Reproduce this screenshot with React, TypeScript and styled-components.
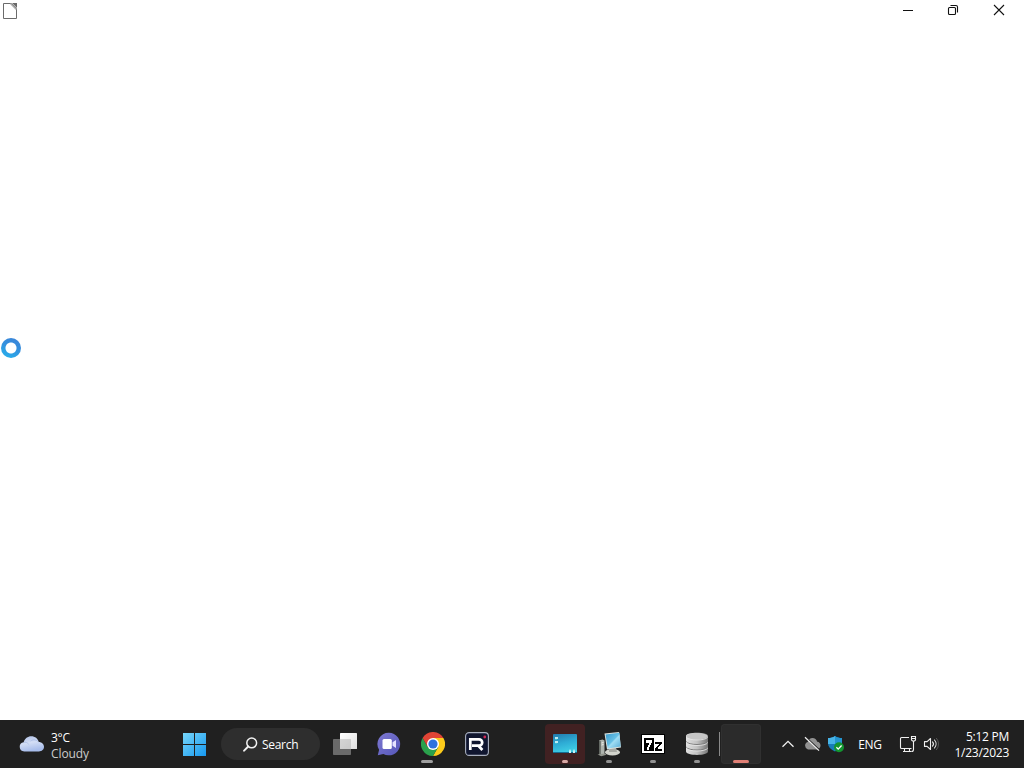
import { ReactNode } from "react";
import styled, { createGlobalStyle } from "styled-components";

interface IApp {
  name: string;
  icon?: ReactNode;
  indicator?: "idle" | "dot" | "alert" | "loading";
}

const WeatherIcon = () => (
  <svg width="25" height="16" viewBox="0 0 24 16" preserveAspectRatio="none">
    <defs>
      <linearGradient id="cloud" x1="0" y1="0" x2="0.3" y2="1">
        <stop offset="0" stopColor="#aebfe6" />
        <stop offset="0.5" stopColor="#d3def5" />
        <stop offset="1" stopColor="#a8bdeb" />
      </linearGradient>
    </defs>
    <path
      d="M5 15.5a4.7 4.7 0 0 1-.5-9.3C5.500 2.600 8.300.3 11.800.3c3.600 0 6.400 2.400 7.100 5.700 2.900.1 5.100 2.100 5.100 4.800s-2.100 4.700-4.900 4.700z"
      fill="url(#cloud)"
    />
    <path d="M4.500 6.200c2-.3 3.700.6 4.800 2M11 5c2.600-2 6-1.200 7.900 1" fill="none" stroke="#91a8dc" strokeWidth=".8" opacity=".6" />
  </svg>
);

const StartIcon = () => (
  <svg width="24" height="24" viewBox="0 0 24 24">
    <defs>
      <linearGradient id="win" gradientUnits="userSpaceOnUse" x1="0" y1="0" x2="24" y2="24">
        <stop offset="0" stopColor="#7bd9fb" />
        <stop offset="1" stopColor="#1698f0" />
      </linearGradient>
    </defs>
    <path d="M1 1h11v11H1zM13 1h11v11H13zM1 13h11v11H1zM13 13h11v11H13z" fill="url(#win)" />
  </svg>
);

const SearchIcon = () => (
  <svg width="15" height="15" viewBox="0 0 15 15" fill="none" stroke="#f2f2f2">
    <circle cx="8.700" cy="5.900" r="4.900" strokeWidth="1.5" />
    <path d="M5.200 9.500L1.100 13.700" strokeWidth="1.9" strokeLinecap="round" />
  </svg>
);

const TaskViewIcon = () => (
  <svg width="24" height="24" viewBox="0 0 24 24">
    <defs>
      <linearGradient id="view" x1="0" y1="0" x2="1" y2="1">
        <stop offset="0" stopColor="#fff" />
        <stop offset="1" stopColor="#dedede" />
      </linearGradient>
    </defs>
    <rect x="0" y="7" width="18" height="16" rx=".8" fill="#6a6a6a" />
    <rect x="7" y="1" width="17" height="16" rx=".6" fill="url(#view)" />
    <path d="M7 7h11v10H7z" fill="#a8a8a8" opacity=".45" />
  </svg>
);

const ChatIcon = () => (
  <svg width="24" height="24" viewBox="0 0 24 24">
    <defs>
      <linearGradient id="chat" x1="0" y1="0" x2="1" y2="1">
        <stop offset="0" stopColor="#7e79d2" />
        <stop offset="1" stopColor="#5556b8" />
      </linearGradient>
    </defs>
    <path d="M12 .7A11.300 11.300 0 1 1 6.400 21.900L.8 23.300l1.300-5.500A11.300 11.300 0 0 1 12 .7z" fill="url(#chat)" />
    <rect x="5.500" y="7" width="9.300" height="10" rx="1.5" fill="#fff" />
    <path d="M15.500 10.300L19 8v8l-3.500-2.300z" fill="#e4e2ff" />
  </svg>
);

const ChromeIcon = () => (
  <svg width="24" height="24" viewBox="0 0 48 48">
    <path d="M24 24V12h20.800A24 24 0 0 1 24 48l10.400-18z" fill="#fccb1b" />
    <path d="M24 24l10.400 6L24 48A24 24 0 0 1 3.200 12l10.400 18z" fill="#2aa14c" />
    <path d="M3.200 12A24 24 0 0 1 44.800 12H24L13.600 30z" fill="#e04435" />
    <circle cx="24" cy="24" r="12" fill="#fff" />
    <circle cx="24" cy="24" r="9.200" fill="#2d72df" />
  </svg>
);

const RIcon = () => (
  <svg width="24" height="24" viewBox="0 0 24 24">
    <rect x=".6" y=".6" width="22.800" height="22.800" rx="3.500" fill="#10162f" stroke="#a9b0bf" strokeWidth="1.1" />
    <path d="M5.300 18V7.300H14a3.200 3.200 0 0 1 0 6.400H7M13.200 13.500l4.200 4.500" fill="none" stroke="#fff" strokeWidth="2.700" />
    <circle cx="19.800" cy="5" r="1.400" fill="#cd2652" />
  </svg>
);

const DesktopIcon = () => (
  <svg width="26" height="24" viewBox="0 0 26 24">
    <defs>
      <linearGradient id="desk" x1="0" y1="0" x2=".3" y2="1">
        <stop offset="0" stopColor="#2379ad" />
        <stop offset=".55" stopColor="#2eacd5" />
        <stop offset="1" stopColor="#3ecbe3" />
      </linearGradient>
    </defs>
    <rect x="1" y="2" width="24" height="19" rx="1" fill="url(#desk)" />
    <path d="M1 20h24v1H1z" fill="#166c91" />
    <path d="M3 5h3v2H3zM3 9h3v2H3z" fill="#bcecf3" />
    <path d="M3 7h2v1H3zM3 11h2v1H3z" fill="#3bc0d2" />
    <path d="M17 19l1-2 1 2v2h-2zM21 19l1-2 1 2v2h-2z" fill="#c7f2f6" />
  </svg>
);

const ComputerIcon = () => (
  <svg width="26" height="26" viewBox="0 0 26 26">
    <defs>
      <linearGradient id="screen" x1="0" y1="0" x2="1" y2="1">
        <stop offset="0" stopColor="#3999cb" />
        <stop offset=".48" stopColor="#65bfe5" />
        <stop offset=".55" stopColor="#a1def4" />
        <stop offset="1" stopColor="#55abd6" />
      </linearGradient>
    </defs>
    <ellipse cx="16.500" cy="21.300" rx="7.500" ry="3.200" fill="#d3d4cd" />
    <path d="M13 17h7l1 4h-8z" fill="#a9aaa4" />
    <path d="M8.500 2.500L23 1l2 15.500L11 18.500z" fill="#dce2de" />
    <path d="M9.600 3.500L23.500 1.800l1.100 13.700-12.800 2z" fill="url(#screen)" />
    <path d="M3 9.500l3.500-1 2 1v14l-4 1-1.500-1z" fill="#aeb3ad" />
    <path d="M3 9.500l1.800.8v13.800L3 23.500z" fill="#656a65" />
    <path d="M5.500 12l2-.4M5.500 14l2-.4" stroke="#f2f2ed" />
    <path d="M1.500 23.500l4 1.700 5-1.500-1.700-1.100z" fill="#92958d" />
  </svg>
);

const SevenZipIcon = () => (
  <svg width="24" height="24" viewBox="0 0 24 24" shapeRendering="crispEdges">
    <path d="M0 2h24v20H0z" fill="#000" />
    <path d="M1 3h22v18H1z" fill="#fff" />
    <path d="M3 6h10v13H3z" fill="#000" />
    <path d="M5 8h6v3h-1v2H9v2H8v3H6v-3h1v-2h1v-2H5z" fill="#fff" />
    <path d="M14 10h7v2h-1v1h-1v1h-1v1h-1v2h4v2h-7v-3h1v-1h1v-1h1v-1h1v-1h-4z" fill="#000" />
  </svg>
);

const DatabaseIcon = () => (
  <svg width="24" height="24" viewBox="0 0 24 24">
    <defs>
      <linearGradient id="disk">
        <stop offset="0" stopColor="#e1e1e1" />
        <stop offset=".5" stopColor="#c2c2c2" />
        <stop offset="1" stopColor="#777" />
      </linearGradient>
    </defs>
    <path d="M1 4C1-.3 23-.3 23 4v15.500c0 4.500-22 4.500-22 0z" fill="url(#disk)" />
    <ellipse cx="12" cy="4.200" rx="10.700" ry="3.200" fill="#c6c6c6" />
    <path d="M1.200 9.500c1.800 4 19.800 4 21.600 0M1.200 15c1.800 4 19.800 4 21.600 0" fill="none" stroke="#7c7c7c" />
    <path d="M1.200 5c1.800 4 19.800 4 21.600 0M1.200 10.500c1.800 4 19.800 4 21.600 0M1.200 16c1.800 4 19.800 4 21.600 0" fill="none" stroke="#e8e8e8" strokeWidth=".8" />
  </svg>
);

const ChevronIcon = () => (
  <svg width="14" height="8" viewBox="0 0 14 8">
    <path d="M1.500 6.800L7 1.300l5.500 5.500" fill="none" stroke="#f0f0f0" strokeWidth="1.3" />
  </svg>
);

const CloudOffIcon = () => (
  <svg width="18" height="16" viewBox="0 0 18 16">
    <path d="M5 13.500a4 4 0 0 1-.3-7.600C5.500 3.500 7.200 2 9.500 2c2.300 0 4.100 1.500 4.700 3.700 2 .1 3.300 1.700 3.300 3.800s-1.500 4-3.600 4z" fill="#929292" />
    <path d="M3 1.100l13.400 12.600" stroke="#202020" strokeWidth="1.200" />
    <path d="M2 1.200l14 13.400" stroke="#f0f0f0" strokeWidth="1.200" />
  </svg>
);

const ShieldIcon = () => (
  <svg width="18" height="18" viewBox="0 0 18 18">
    <path d="M8 1c2 1.500 4.300 2 7 2v5.500c0 3.300-2.500 6-7 8-4.500-2-7-4.700-7-8V3c2.700 0 5-.5 7-2z" fill="#177cb9" />
    <path d="M8 1v8H1V3c2.700 0 5-.5 7-2z" fill="#48b4e7" />
    <path d="M8 1c2 1.500 4.300 2 7 2v6H8z" fill="#2494d0" />
    <circle cx="12" cy="12.200" r="5" fill="#129530" />
    <path d="M9.400 12.300l1.800 1.800 3.400-3.600" fill="none" stroke="#fff" strokeWidth="1.300" />
  </svg>
);

const NetworkIcon = () => (
  <svg width="18" height="18" viewBox="0 0 18 18" fill="none" stroke="#efefef" strokeWidth="1.1">
    <path d="M10 2.500H2.500a1 1 0 0 0-1 1v9a1 1 0 0 0 1 1h10M5.500 13.500v3M10.500 13.500v3M4 16.500h8.500" />
    <path d="M12.500 1.500h4v3.500l-1 1h-2l-1-1zM14.500 6v8.500q0 2-2 2M12.500 3.500h4" />
  </svg>
);

const VolumeIcon = () => (
  <svg width="18" height="16" viewBox="0 0 18 16" fill="none" strokeLinecap="round">
    <path d="M1.500 5.600h2.600l3.400-3.100v11L4.100 10.400H1.500z" stroke="#eee" strokeWidth="1.100" strokeLinejoin="round" />
    <path d="M9.500 5.800a3.300 3.300 0 0 1 0 4.400M11.500 4a6 6 0 0 1 0 8" stroke="#eee" strokeWidth="1.100" />
    <path d="M13.500 2.300a8.500 8.500 0 0 1 0 11.400" stroke="#555" />
  </svg>
);

const apps: IApp[] = [
  { name: "Task View", icon: <TaskViewIcon /> },
  { name: "Chat", icon: <ChatIcon /> },
  { name: "Chrome", icon: <ChromeIcon />, indicator: "idle" },
  { name: "R", icon: <RIcon /> },
  { name: "Spacer" },
  { name: "Desktop", icon: <DesktopIcon />, indicator: "alert" },
  { name: "Computer", icon: <ComputerIcon />, indicator: "dot" },
  { name: "7-Zip", icon: <SevenZipIcon />, indicator: "dot" },
  { name: "Database", icon: <DatabaseIcon />, indicator: "dot" },
  { name: "Document", indicator: "loading" },
];

export default function App() {
  return (
    <>
      <GlobalStyle />
      <Screen>
        <TitleBar>
          <svg width="16" height="18" viewBox="0 0 16 18">
            <path d="M1.500 1.500h8l5 5v10h-13z" fill="#fff" stroke="#6b6b6b" />
            <path d="M10 1h5v5z" fill="#696969" />
            <path d="M8.500 1.500l6 6" stroke="#ababab" strokeWidth="1.500" />
          </svg>
          <WindowControls>
            <button aria-label="Minimize">
              <svg width="12" height="12" viewBox="0 0 12 12">
                <path d="M2 6.500h10" stroke="#111" />
              </svg>
            </button>
            <button aria-label="Restore">
              <svg width="12" height="12" viewBox="0 0 12 12" fill="none" stroke="#111" strokeWidth="1.100">
                <rect x="1.500" y="3.500" width="7" height="7" rx="1" />
                <path d="M3.500 1.500H9A1.500 1.500 0 0 1 10.500 3v5.500" />
              </svg>
            </button>
            <button aria-label="Close">
              <svg width="12" height="12" viewBox="0 0 12 12">
                <path d="M1 1l10 10M11 1L1 11" stroke="#111" strokeWidth="1.100" />
              </svg>
            </button>
          </WindowControls>
        </TitleBar>
        <Content />
        <Taskbar>
          <Weather>
            <WeatherIcon />
            <WeatherText>
              <strong>3°C</strong>
              <span>Cloudy</span>
            </WeatherText>
          </Weather>
          <StartButton aria-label="Start">
            <StartIcon />
          </StartButton>
          <SearchButton>
            <SearchIcon />
            <span>Search</span>
          </SearchButton>
          <AppList>
            {apps.map((app) => (
              <AppSlot key={app.name}>
                <AppTile $kind={app.indicator}>{app.icon}</AppTile>
                {app.indicator && <Indicator $kind={app.indicator} />}
              </AppSlot>
            ))}
          </AppList>
          <Tray>
            <TrayItem $width={24}>
              <ChevronIcon />
            </TrayItem>
            <TrayItem $width={24}>
              <CloudOffIcon />
            </TrayItem>
            <TrayItem $width={24}>
              <ShieldIcon />
            </TrayItem>
            <TrayItem $width={44}>
              <span>ENG</span>
            </TrayItem>
            <TrayItem $width={32}>
              <NetworkIcon />
            </TrayItem>
            <TrayItem $width={16}>
              <VolumeIcon />
            </TrayItem>
            <Clock>
              <span>5:12 PM</span>
              <span>1/23/2023</span>
            </Clock>
          </Tray>
        </Taskbar>
        <BusyCursor />
      </Screen>
    </>
  );
}

const GlobalStyle = createGlobalStyle`
  * {
    box-sizing: border-box;
  }

  body {
    margin: 0;
    overflow: hidden;
    font-family: "Open Sans", "Noto Sans", sans-serif;
  }

  button {
    padding: 0;
    border: none;
    background-color: transparent;
    color: inherit;
    font: inherit;
  }

  svg {
    display: block;
    flex-shrink: 0;
  }
`;

const Screen = styled.div`
  position: relative;
  display: flex;
  flex-direction: column;
  width: 1024px;
  height: 768px;
  background-color: #fff;
`;

const TitleBar = styled.div`
  display: flex;
  align-items: flex-start;
  justify-content: space-between;
  height: 24px;
  padding: 2px 2px 0;
`;

const WindowControls = styled.div`
  display: flex;

  button {
    display: flex;
    justify-content: center;
    width: 46px;
    padding-top: 2px;
  }
`;

const Content = styled.main`
  flex: 1;
`;

const Taskbar = styled.div`
  display: flex;
  align-items: center;
  height: 48px;
  background-color: #202020;
  color: #fff;
  font-size: 12px;
  font-weight: 500;
  line-height: 16px;
`;

const Weather = styled.div`
  display: flex;
  align-items: center;
  gap: 7px;
  width: 172px;
  padding-left: 19px;
`;

const WeatherText = styled.div`
  display: flex;
  flex-direction: column;
  padding-top: 3px;

  strong {
    font-weight: 500;
    letter-spacing: -0.3px;
  }

  span {
    color: #ccc;
    letter-spacing: -0.1px;
  }
`;

const StartButton = styled.button`
  display: flex;
  justify-content: center;
  width: 44px;
`;

const SearchButton = styled.button`
  display: flex;
  align-items: center;
  gap: 4px;
  width: 99px;
  height: 32px;
  margin: 0 3px 0 5px;
  padding-left: 22px;
  border-radius: 16px;
  background-color: #2e2e2e;

  span {
    padding-top: 1px;
    letter-spacing: -0.3px;
  }
`;

const AppList = styled.div`
  display: flex;
`;

const AppSlot = styled.div`
  position: relative;
  display: flex;
  align-items: center;
  justify-content: center;
  width: 44px;
  height: 48px;
`;

const tileColors = {
  idle: "transparent",
  dot: "transparent",
  alert: "#412122",
  loading: "#2b2b2b",
};

const AppTile = styled.div<{ $kind?: IApp["indicator"] }>`
  display: flex;
  align-items: center;
  justify-content: center;
  width: 40px;
  height: 40px;
  border-radius: 4px;
  background-color: ${({ $kind }) => ($kind ? tileColors[$kind] : "transparent")};

  ${({ $kind }) =>
    $kind === "loading" &&
    `
    box-shadow: inset 0 0 0 1px #303030;

    &::before {
      content: "";
      position: absolute;
      left: 0;
      top: 12px;
      width: 1px;
      height: 24px;
      background-color: #8a8a8a;
    }
  `}
`;

const indicatorWidths = { idle: 12, dot: 6, alert: 6, loading: 16 };
const indicatorColors = { idle: "#a0a0a0", dot: "#929292", alert: "#d8aaa6", loading: "#e18076" };

const Indicator = styled.div<{ $kind: "idle" | "dot" | "alert" | "loading" }>`
  position: absolute;
  bottom: 5px;
  left: ${({ $kind }) => ($kind === "idle" ? "16px" : "50%")};
  transform: translateX(-50%);
  width: ${({ $kind }) => indicatorWidths[$kind]}px;
  height: 3px;
  border-radius: 2px;
  background-color: ${({ $kind }) => indicatorColors[$kind]};
`;

const Tray = styled.div`
  display: flex;
  align-items: center;
  justify-content: flex-end;
  flex: 1;
  padding-right: 15px;
`;

const TrayItem = styled.div<{ $width: number }>`
  display: flex;
  align-items: center;
  justify-content: center;
  width: ${({ $width }) => $width}px;
  letter-spacing: -0.3px;

  span {
    padding-top: 1px;
  }
`;

const Clock = styled.div`
  display: flex;
  flex-direction: column;
  width: 69px;
  padding-top: 1px;
  text-align: right;
  letter-spacing: -0.25px;
`;

const BusyCursor = styled.div`
  position: absolute;
  left: 1px;
  top: 338px;
  width: 20px;
  height: 20px;
  border-radius: 50%;
  background: radial-gradient(
    circle,
    #fff 0 5px,
    transparent 6px
  ), linear-gradient(25deg, #25b5ee, #3490de 55%, #3d82d7);
`;
